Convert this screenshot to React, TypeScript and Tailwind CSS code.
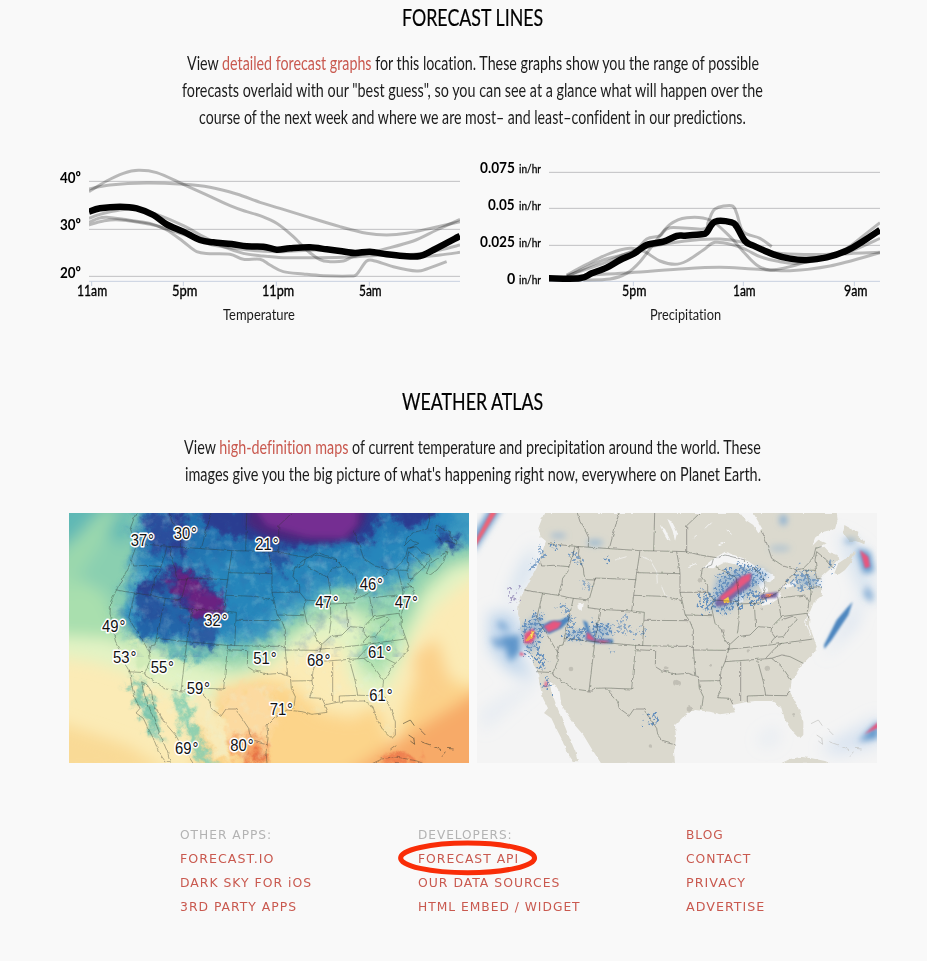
import { useLayoutEffect, useRef, useState, type ReactNode } from "react";

type Pt = [number, number];

/** Condenses a single line of text horizontally until it fills its box. */
function Fit({ className, children }: { className: string; children: ReactNode }) {
  const outer = useRef<HTMLSpanElement>(null);
  const inner = useRef<HTMLSpanElement>(null);
  const [scale, setScale] = useState(1);
  useLayoutEffect(() => {
    if (outer.current && inner.current) {
      setScale(outer.current.clientWidth / inner.current.offsetWidth);
    }
  }, []);
  return (
    <span ref={outer} className={`block ${className}`}>
      <span
        ref={inner}
        className="inline-block origin-left whitespace-nowrap"
        style={{ transform: `scaleX(${scale})` }}
      >
        {children}
      </span>
    </span>
  );
}

const parse = (s: string): Pt[] =>
  s.trim().split(/\s+/).map((p) => p.split(",").map(Number) as Pt);

/** Catmull-Rom spline through the points. */
function smooth(s: string) {
  const p = parse(s);
  let d = `M${p[0][0]},${p[0][1]}`;
  for (let i = 0; i < p.length - 1; i++) {
    const a = p[i - 1] ?? p[i];
    const b = p[i];
    const c = p[i + 1];
    const e = p[i + 2] ?? c;
    d += `C${b[0] + (c[0] - a[0]) / 6},${b[1] + (c[1] - a[1]) / 6} ${c[0] - (e[0] - b[0]) / 6},${c[1] - (e[1] - b[1]) / 6} ${c[0]},${c[1]}`;
  }
  return d;
}

const east = (s: string) => parse(s).map(([x, y]) => `${x + 615},${y}`).join(" ");

const temperature = {
  best: "117,170 150,160 210,155 260,160 310,180 350,208 400,230 450,255 490,262 545,267 590,274 640,275 680,284 720,280 780,277 830,283 870,288 915,294 960,290 1010,298 1060,303 1110,303 1150,285 1230,243",
  others: [
    "117,110 170,78 220,55 265,46 320,53 400,88 460,115 540,152 590,170 630,182 680,205 730,245 770,285 810,314 840,320 880,318 910,305 960,293 1000,283 1090,258 1160,225 1230,193",
    "117,102 180,90 290,84 400,88 480,97 560,117 630,142 690,160 770,185 870,215 950,235 1010,240 1070,235 1150,218 1230,200",
    "117,190 150,178 210,165 260,163 320,178 400,212 460,245 520,275 580,295 630,302 700,308 800,308 900,306 1000,300 1100,297 1170,285 1230,270",
    "117,202 145,190 170,187 220,193 300,205 350,225 400,260 440,290 480,296 540,298 580,313 630,313 660,330 700,350 760,357 820,362 900,363 920,358 950,318 975,318 1030,335 1100,348 1130,342 1190,320",
    "117,210 160,198 210,195 300,208 350,222 420,245 480,268 550,280 620,287 700,290 800,285 900,290 1000,300 1100,305 1170,300 1230,292",
  ],
};

const precipitation = {
  best: "237,370 330,370 365,355 410,338 450,315 490,297 530,270 580,260 620,243 645,242 695,238 710,232 735,200 785,202 800,215 825,258 850,272 910,298 960,311 1010,315 1070,307 1130,287 1180,258 1230,225",
  others: [
    "290,360 350,328 420,295 480,280 520,288 570,318 615,328 650,318 700,285 735,262 790,270 830,285 870,305 920,318 980,325 1060,310 1130,280 1170,250 1230,203",
    "290,365 400,315 490,290 530,252 570,242 600,218 700,222 715,200 735,162 785,152 800,175 820,230 870,250 905,275",
    "340,375 420,372 470,355 510,320 560,255 600,208 650,188 720,195 780,245 820,290 860,330 900,345 960,335 1060,305 1150,295 1230,292",
    "237,375 330,362 480,353 645,341 750,337 850,342 960,347 1080,333 1230,293",
    "290,362 400,325 500,285 645,258 750,252 820,262 900,290 980,298 1100,296 1150,285 1230,250",
  ],
};

function Plot({
  left,
  grid,
  ticks,
  data,
  className,
}: {
  left: number;
  grid: number[];
  ticks: number[];
  data: { best: string; others: string[] };
  className: string;
}) {
  const width = 1230 - left;
  return (
    <svg className={className} viewBox={`${left} 0 ${width} 405`} fill="none">
      {grid.map((y) => (
        <path key={y} d={`M${left},${y}H1230`} stroke="#c0c0c2" strokeWidth={3} />
      ))}
      <path d={`M${left},379H1230`} stroke="#c8d1e0" strokeWidth={3} />
      {ticks.map((x) => (
        <path key={x} d={`M${x},379V393`} stroke="#c8d1e0" strokeWidth={3} />
      ))}
      {data.others.map((l) => (
        <path key={l} d={smooth(l)} stroke="#000" strokeOpacity={0.26} strokeWidth={9} />
      ))}
      <path d={smooth(data.best)} stroke="#000" strokeWidth={19.5} strokeLinejoin="round" />
    </svg>
  );
}

/* ---- Map geometry, three units to the pixel ---- */

const westCoast =
  "222,24 205,70 212,95 228,108 222,125 213,150 208,170 190,205 166,250 146,290 144,330 150,350 152,375 162,415 180,450 194,485 204,502 209,540 219,580 234,610 222,624 244,640 256,665 274,700 292,745 312,772 325,772 316,740 299,700 279,650 259,600 244,560 239,530 256,540 269,560 274,600 294,630 314,660 340,690 364,730 394,776";
const gulfCoast = "615,776 612,740 618,700 " + east(
  "0,660 25,635 60,615 105,620 135,628 180,622 172,600 210,592 240,588 290,588 318,605 328,640 345,670 375,700 385,690 385,650 370,610 345,560 350,527 380,480 415,445 425,425 415,395 402,360 405,320 417,290 440,272 442,250 422,237 440,215 470,188 490,165 488,150 462,140 448,125 428,130 455,115 430,104 412,122 420,98 440,82 480,72 488,45 485,24"
);
const land = `${westCoast} ${gulfCoast}`;
const novaScotia = east("478,205 490,175 515,158 540,140 530,170 510,195 492,208");
const newfoundland = east("505,85 508,60 530,72 550,80 548,95 570,108 568,118 545,108 525,110");
const cuba = east("315,776 345,762 380,755 410,760 450,768 470,776");

const westBorders = [
  "234,116 318,124 420,131 510,137 615,139 650,140 690,150 740,158",
  "322,24 330,50 345,75 356,98 355,126",
  "447,24 418,130",
  "554,24 551,138",
  "212,170 215,183 250,181 297,185",
  "315,124 308,150 297,185 293,200 278,220 276,232 265,271",
  "328,124 325,150 332,172 340,190 342,212 346,224 375,225 376,219",
  "163,255 218,264 265,271 310,280 357,285 376,219 497,224",
  "510,138 497,224 485,318",
  "500,203 630,206",
  "357,285 354,308 390,313 485,318 523,322 518,422",
  "310,280 283,400 374,410 495,421 615,424 670,424",
  "390,313 374,413 357,558",
  "218,264 200,340 262,440 265,465 250,500",
  "283,400 279,420 268,422 262,440",
  "198,500 250,503 246,509 312,552 357,558 372,558 373,550 407,549",
  "407,549 485,552 497,421",
  "407,549 440,585 448,610 478,632 492,612 520,612 540,640 560,670 563,690 580,710 617,720",
  "492,271 580,274 610,280 635,287",
  "523,346 655,347",
  "497,434 557,437 556,485 575,497 600,503 620,508",
];
const eastBorders = [
  "35,140 35,62 75,24",
  "5,140 12,180 15,205 15,262 22,290 30,328 45,350 55,375 55,435 62,510",
  "15,262 98,262",
  "30,330 112,332",
  "115,162 110,180 82,190 78,215 98,240 98,262 115,283 110,310 115,332 120,355 140,375 145,395 155,412 165,418 162,432 150,470 138,500 135,527 138,550 128,578 165,580 173,597",
  "55,435 152,436",
  "0,508 40,505 70,515 73,550 85,575 80,612",
  "73,528 135,527",
  "115,285 188,290",
  "122,185 150,200 183,218 190,260 190,300 192,350 187,385",
  "165,418 190,395 225,390 250,365 290,368 300,355 320,335",
  "188,297 238,295 262,293",
  "238,295 242,365",
  "308,275 318,335 395,325 402,340",
  "318,278 392,270 402,290 397,320",
  "152,436 165,432 285,420 415,402",
  "150,470 290,460 320,485 350,527",
  "272,460 300,430 320,415",
  "290,368 288,380 300,397 285,415",
  "300,397 325,395 345,365 365,345 352,334 320,345",
  "197,470 197,588",
  "248,467 265,530 272,570",
  "217,588 217,573 272,571 335,572 345,560",
  "290,460 320,450 345,455 385,475",
  "262,80 275,115 290,160 325,183 365,195 385,190 415,160 422,130 440,125",
  "385,195 420,196 425,220 440,222",
  "393,198 400,225 408,260 405,290",
  "408,247 440,245",
  "425,140 420,165 425,200",
  "425,140 455,165 475,190",
  "128,158 150,150 210,165 235,190 262,210 270,240 260,285 290,272 310,262 325,240 365,195",
];

function Borders({ coast }: { coast: boolean }) {
  return (
    <g fill="none" stroke="#2a3028" strokeOpacity={0.5} strokeWidth={2.2} filter="url(#ragged)">
      {westBorders.map((b) => (
        <polyline key={b} points={b} />
      ))}
      {eastBorders.map((b) => (
        <polyline key={b} points={east(b)} />
      ))}
      {coast && (
        <>
          <polyline points={westCoast} />
          <polyline points={gulfCoast} />
          <polygon points={novaScotia} />
          <polygon points={newfoundland} />
          <polygon points={cuba} />
          <polyline points={east("82,188 110,165 150,143 205,160 225,185 195,190 180,218")} />
          <polyline points={east("370,735 388,722")} />
          {islands.map((b) => (
            <polyline key={b} points={east(b)} strokeWidth={3} />
          ))}
        </>
      )}
    </g>
  );
}

const islands = [
  "408,656 430,645 442,662",
  "425,690 440,700 443,718 430,708",
  "455,670 475,690",
  "462,710 490,720",
  "500,725 525,735",
  "540,730 560,732",
  "525,755 535,740",
];

function Filters() {
  return (
    <defs>
      <filter id="ragged" x="-5%" y="-5%" width="110%" height="110%">
        <feTurbulence type="fractalNoise" baseFrequency="0.06" numOctaves={2} seed={4} />
        <feDisplacementMap in="SourceGraphic" scale={9} xChannelSelector="R" yChannelSelector="G" />
      </filter>
      <filter id="front" x="-20%" y="-20%" width="140%" height="140%">
        <feTurbulence type="fractalNoise" baseFrequency="0.02" numOctaves={5} seed={3} result="n" />
        <feGaussianBlur in="SourceGraphic" stdDeviation={19} result="b" />
        <feDisplacementMap in="b" in2="n" scale={70} xChannelSelector="R" yChannelSelector="G" />
      </filter>
      <filter id="rough" x="-20%" y="-20%" width="140%" height="140%">
        <feTurbulence type="fractalNoise" baseFrequency="0.03" numOctaves={5} seed={8} result="n" />
        <feGaussianBlur in="SourceGraphic" stdDeviation={10} result="b" />
        <feDisplacementMap in="b" in2="n" scale={75} xChannelSelector="R" yChannelSelector="G" />
      </filter>
      <filter id="terrain" x="0" y="0" width="100%" height="100%">
        <feTurbulence type="fractalNoise" baseFrequency="0.025" numOctaves={5} seed={21} />
        <feColorMatrix values="0 0 0 0 0.05  0 0 0 0 0.12  0 0 0 0 0.4  2.6 0 0 0 -1.25" />
      </filter>
      <filter id="glint" x="0" y="0" width="100%" height="100%">
        <feTurbulence type="fractalNoise" baseFrequency="0.03" numOctaves={5} seed={5} />
        <feColorMatrix values="0 0 0 0 0.75  0 0 0 0 0.95  0 0 0 0 0.85  0 2.6 0 0 -1.3" />
      </filter>
      <filter id="soft" x="-30%" y="-30%" width="160%" height="160%">
        <feGaussianBlur stdDeviation={22} />
      </filter>
      <filter id="mist" x="-30%" y="-30%" width="160%" height="160%">
        <feGaussianBlur stdDeviation={9} />
      </filter>
      <filter id="edge" x="-30%" y="-30%" width="160%" height="160%">
        <feGaussianBlur stdDeviation={3} />
      </filter>
      <filter id="speckle" x="-30%" y="-30%" width="160%" height="160%">
        <feTurbulence type="fractalNoise" baseFrequency="0.13" numOctaves={2} seed={11} result="n" />
        <feTurbulence type="fractalNoise" baseFrequency="0.05" numOctaves={3} seed={2} result="w" />
        <feDisplacementMap in="SourceGraphic" in2="w" scale={55} xChannelSelector="R" yChannelSelector="G" result="d" />
        <feColorMatrix in="n" values="0 0 0 0 0  0 0 0 0 0  0 0 0 0 0  0 0 9 0 -4.3" result="m" />
        <feComposite in="d" in2="m" operator="in" />
      </filter>
      <clipPath id="landmass">
        <polygon points={land} transform="translate(6 0)" />
      </clipPath>
    </defs>
  );
}

const readings: [string, number, number][] = [
  ["37", 212, 123],
  ["30", 341, 101],
  ["21", 586, 134],
  ["46", 899, 255],
  ["47", 766, 310],
  ["47", 1004, 310],
  ["32", 433, 363],
  ["49", 126, 382],
  ["53", 159, 473],
  ["55", 272, 504],
  ["51", 580, 478],
  ["68", 741, 484],
  ["61", 924, 459],
  ["59", 380, 568],
  ["61", 928, 587],
  ["71", 629, 629],
  ["69", 345, 746],
  ["80", 511, 739],
];

function TemperatureMap() {
  return (
    <svg className="h-[250px] w-[400px]" viewBox="27 24 1200 750" fontFamily="'Liberation Sans', Arial, sans-serif">
      <Filters />
      <rect x="27" y="24" width="1200" height="750" fill="#fbebb6" />
      <g filter="url(#soft)">
        <polygon points="-40,640 200,720 330,800 -40,820" fill="#f9da96" />
        <polygon points="460,560 600,520 690,540 780,620 880,640 950,600 1000,740 1050,560 1110,430 1160,520 1280,560 1280,820 400,820 420,620" fill="#fcd48a" />
        <polygon points="1060,450 1130,400 1180,560 1080,640" fill="#fbd08a" />
        <polygon points="1150,620 1280,540 1280,820 840,820 960,740" fill="#f7aa68" />
        <polygon points="-40,-40 1280,-40 1280,190 1200,240 1120,310 1060,400 1000,530 960,590 900,560 860,500 850,430 790,410 700,440 620,490 560,520 480,540 440,640 330,560 200,500 100,470 -40,450" fill="#e2f3c4" />
        <polygon points="-40,-40 1280,-40 1280,160 1170,190 1090,270 1040,380 1010,450 960,520 900,490 900,420 930,360 870,310 770,350 690,400 600,480 520,500 420,480 300,450 140,400 -40,390" fill="#a9dfae" />
        <polygon points="-40,-40 1280,-40 1280,150 1180,170 1090,230 1040,340 930,310 800,300 700,370 620,450 530,480 420,440 300,420 180,370 130,260 -40,180" fill="#8acfb0" />
        <polygon points="-40,-40 220,-40 200,120 100,70 -40,150" fill="#5fb8b5" />
        <polygon points="130,10 190,10 20,270 0,150" fill="#9bd8ad" />
      </g>
      <g filter="url(#front)">
        <polygon points="235,-20 1280,-20 1280,90 1190,125 1120,150 1060,200 1010,240 930,250 850,230 780,280 690,340 620,400 540,420 440,430 330,410 215,400 190,330 185,270 225,190" fill="#3f9dc2" />
        <polygon points="250,-20 1240,-20 1150,110 1050,180 900,200 780,240 700,270 620,340 540,380 440,410 330,400 230,380 210,290 260,190" fill="#2586bb" />
        <polygon points="250,0 1130,0 1100,60 1000,80 900,130 760,140 660,170 640,220 560,150 420,160 400,220 330,180 240,170" fill="#2473b1" />
      </g>
      <g filter="url(#rough)">
        <polygon points="225,250 300,190 400,180 460,230 500,320 440,400 370,380 330,400 230,390" fill="#2265a9" />
        <polygon points="250,20 310,20 340,100 330,170 270,120" fill="#2a4d9c" />
        <polygon points="320,0 375,0 385,130 365,170 345,120" fill="#2c3d91" />
        <polygon points="225,260 300,200 320,250 290,270 230,285" fill="#2a3f90" />
        <polygon points="225,300 300,280 310,340 260,350" fill="#25529d" />
        <polygon points="310,195 400,190 450,240 500,320 440,370 370,330 340,270" fill="#363388" />
        <polygon points="620,130 690,130 680,190 640,210" fill="#2657a0" />
        <polygon points="1125,80 1180,85 1205,125 1145,125" fill="#274896" />
      </g>
      <g filter="url(#rough)">
        <polygon points="330,215 400,205 430,250 490,290 480,330 390,340 380,290 400,260" fill="#6a2381" />
        <polygon points="325,230 390,225 400,270 340,270" fill="#65217f" />
        <polygon points="360,400 440,350 470,370 460,430" fill="#2b5ba2" />
      </g>
      <g filter="url(#rough)">
        <polygon points="490,560 620,540 650,640 620,720 550,740 490,680" fill="#fcdaa0" />
        <polygon points="210,400 270,420 290,500 230,490" fill="#d0ebb8" />
        <polygon points="390,580 440,560 480,640 520,760 470,760 420,650" fill="#f8eab8" />
        <polygon points="345,560 375,570 405,670 460,780 430,780 375,680" fill="#85ceb0" />
        <polygon points="215,520 240,530 290,640 310,720 280,690 240,620" fill="#74c3ac" />
        <polygon points="320,420 450,430 430,460 330,470" fill="#63b5b4" />
        <polygon points="505,700 600,690 630,780 560,780" fill="#f6a566" />
        <polygon points="570,735 610,740 600,780 570,780" fill="#e76a3e" />
        <polygon points="890,470 930,430 970,380 1000,400 940,450" fill="#7dccb0" />
        <polygon points="960,770 1000,755 1060,765 1090,780" fill="#e9623c" />
      </g>
      <g clipPath="url(#landmass)">
        <rect x="27" y="24" width="1200" height="430" filter="url(#terrain)" opacity={0.25} />
        <rect x="27" y="24" width="1200" height="750" filter="url(#glint)" opacity={0.22} />
      </g>
      <g filter="url(#rough)">
        <polygon points="400,0 970,0 930,110 840,105 700,130 600,125 540,100 430,60" fill="#2b3c91" />
        <polygon points="980,0 1130,0 1120,55 1000,55" fill="#2a3b90" />
      </g>
      <g filter="url(#mist)">
        <polygon points="565,0 930,0 910,60 870,105 790,115 700,110 620,95 560,60" fill="#49257d" />
        <polygon points="580,0 895,0 890,60 850,100 740,95 620,60" fill="#752f92" />
      </g>
      <g transform="translate(6 0)">
        <Borders coast />
      </g>
      <g fontSize={49} fill="#111" stroke="#fff" strokeWidth={9} strokeLinejoin="round" paintOrder="stroke">
        {readings.map(([t, x, y]) => (
          <text key={`${x}-${y}`} x={x} y={y} textLength={70} lengthAdjust="spacingAndGlyphs">
            {t}
            <tspan dx={3}>°</tspan>
          </text>
        ))}
      </g>
    </svg>
  );
}

const water = [
  east("82,188 110,165 150,140 205,160 245,185 225,192 190,180 150,172 115,190"),
  east("225,195 265,192 300,215 285,232 268,225 278,262 262,262 245,230"),
  east("183,225 205,225 205,290 188,295 180,260"),
  east("255,292 285,278 318,262 312,280 285,298 262,302"),
  east("318,243 355,228 368,232 350,245 322,250"),
  east("195,24 235,24 262,72 250,85 235,60 212,45"),
  "570,62 585,72 602,108 592,102 582,85",
  "592,42 606,50 622,82 615,108 608,78",
  "325,290 338,295 335,318 326,310",
];

function PrecipitationMap() {
  return (
    <svg className="h-[250px] w-[400px]" viewBox="21 24 1200 750">
      <rect x="21" y="24" width="1200" height="750" fill="#f4f4f4" />
      <g filter="url(#soft)" fill="#b5cfea">
        <polygon points="60,320 140,330 150,460 200,520 120,500 60,430" fillOpacity={0.9} />
        <polygon points="150,180 200,110 190,200 130,290 110,280" fillOpacity={0.5} />
        <polygon points="30,620 180,520 200,540 40,680" fillOpacity={0.2} />
        <polygon points="1100,80 1180,130 1220,300 1170,260" fillOpacity={0.5} />
        <polygon points="1060,460 1180,260 1160,360" fillOpacity={0.45} />
        <polygon points="1050,730 1230,630 1230,720 1100,750" fillOpacity={0.45} />
        <polygon points="860,700 920,660 930,710 880,730" fillOpacity={0.2} />
      </g>
      <g filter="url(#mist)" fill="#5f96cb">
        <polygon points="95,395 150,390 150,440 120,470" />
        <polygon points="60,400 140,400 140,420 80,430" fillOpacity={0.7} />
        <polygon points="80,350 100,350 120,380 90,370" fillOpacity={0.7} />
        <polygon points="1160,130 1200,140 1212,200 1180,205" />
        <polygon points="1190,240 1210,270 1205,295 1180,270" fillOpacity={0.7} />
        <polygon points="1165,710 1225,645 1225,700" />
        <polygon points="10,90 60,10 95,10 10,145" />
      </g>
      <g filter="url(#ragged)">
        <polygon points={land} fill="#dbd9ce" />
        <polygon points={novaScotia} fill="#dbd9ce" />
        <polygon points={newfoundland} fill="#dbd9ce" />
        <polygon points={cuba} fill="#dbd9ce" />
        {water.map((w) => (
          <polygon key={w} points={w} fill="#f4f4f4" />
        ))}
        <g fill="none" stroke="#f4f4f4" strokeWidth={3}>
          <polyline points="515,155 540,165 560,200 562,235" strokeOpacity={0.7} />
          <polyline points="575,245 585,270 600,278" strokeOpacity={0.7} />
          <polyline points="435,165 470,155" strokeOpacity={0.7} />
          <polyline points={east("55,100 65,90")} />
          <polyline points={east("90,70 110,50")} />
          <polyline points={east("130,120 150,112")} />
          <polyline points={east("155,75 170,88")} />
          <polyline points={east("40,185 65,175")} />
          <polyline points={east("404,320 392,350 408,392")} />
        </g>
        <g fill="#c1bfb5">
          <circle cx="303" cy="492" r="7" />
          <circle cx="587" cy="490" r="6" />
          <circle cx="618" cy="533" r="9" />
          <circle cx="541" cy="723" r="5" />
          <circle cx="690" cy="226" r="7" />
          <circle cx="658" cy="612" r="8" />
          <circle cx="625" cy="535" r="8" />
          <circle cx="892" cy="490" r="8" />
          <circle cx="759" cy="378" r="6" />
          <circle cx="722" cy="481" r="4" />
          <circle cx="835" cy="438" r="5" />
          <circle cx="875" cy="312" r="4" />
          <circle cx="690" cy="542" r="4" />
          <circle cx="971" cy="628" r="4" />
        </g>
      </g>
      <g filter="url(#mist)" fill="#7ea9d2">
        <ellipse cx="265" cy="92" rx="24" ry="8" fillOpacity={0.6} />
        <ellipse cx="375" cy="113" rx="25" ry="9" fillOpacity={0.7} />
        <ellipse cx="940" cy="45" rx="10" ry="16" />
        <ellipse cx="930" cy="130" rx="32" ry="10" fillOpacity={0.4} />
        <ellipse cx="1140" cy="108" rx="18" ry="7" />
        <polygon points="150,370 210,325 220,360 205,400 190,440 160,430" fillOpacity={0.6} />
        <polygon points="740,220 800,190 870,190 900,210 830,270 770,320 720,310" fillOpacity={0.6} />
        <polygon points="970,235 1000,215 1045,225 1045,240" fillOpacity={0.8} />
        <polygon points="365,365 420,360 420,395 370,395" fillOpacity={0.6} />
        <polygon points="290,378 345,378 345,400 290,400" fillOpacity={0.6} />
      </g>
      <g filter="url(#speckle)" fill="#6690bd">
        <polygon points="150,370 210,315 230,360 215,400 190,440 230,460 225,490 165,450" />
        <polygon points="265,300 280,290 320,350 300,370" fillOpacity={0.8} />
        <polygon points="285,370 350,370 350,410 285,405" />
        <polygon points="365,350 425,350 435,385 400,405 360,395" />
        <polygon points="450,330 475,340 485,380 525,375 525,390 440,390" fillOpacity={0.7} />
        <polygon points="410,425 440,430 440,450 425,450" fillOpacity={0.6} />
        <polygon points="185,170 220,130 230,140 205,180 175,205" fillOpacity={0.8} />
        <polygon points="115,260 150,250 130,300 110,300" fill="#8a7fb0" fillOpacity={0.7} />
        <polygon points="240,115 265,115 250,145" />
        <polygon points="305,130 350,180 330,185 295,150" fillOpacity={0.8} />
        <polygon points="330,230 370,235 360,255 325,250" fillOpacity={0.6} />
        <polygon points="400,155 415,155 415,175 400,170" />
        <polygon points="220,525 240,525 240,555 225,555" />
        <polygon points="520,645 560,630 575,640 550,660 525,660" />
        <polygon points="730,260 740,220 800,180 870,185 900,210 850,250 900,290 860,300 810,295 770,325 700,315 715,270" />
        <polygon points="950,240 980,190 1030,200 1050,240 990,255" fillOpacity={0.8} />
        <polygon points="1065,165 1095,160 1095,200 1065,195" fillOpacity={0.7} />
        <polygon points="680,300 705,250 720,270 700,320" />
      </g>
      <g fill="#4e86bf">
        <g filter="url(#edge)">
          <polygon points="213,362 240,348 270,346 300,332 300,345 275,370 235,388" />
          <polygon points="338,345 352,352 362,385 380,402 428,402 430,415 380,415 345,405 350,380" />
          <polygon points="1063,432 1062,420 1100,345 1130,310 1148,290 1135,330 1085,405" />
          <polygon points="735,290 800,220 845,205 840,245 800,270 770,300 740,305" fill="#7a6aa5" />
          <polygon points="870,270 925,260 920,278 870,282" fill="#7a6aa5" />
        </g>
      </g>
      <g filter="url(#edge)" fill="#e6567f">
        <polygon points="222,364 250,348 275,352 265,370 235,382" />
        <polygon points="352,380 375,405 425,408 400,414 350,402" />
        <polygon points="165,385 190,370 197,395 185,415 162,415" />
        <polygon points="150,440 165,450 150,452" />
        <polygon points="815,215 842,205 840,225 790,265 755,290 750,275 790,245" />
        <polygon points="880,272 910,265 900,275" />
        <polygon points="1170,135 1195,155 1200,185 1185,190" />
        <polygon points="1183,688 1225,650 1225,668" />
        <polygon points="15,108 65,15 80,22 15,128" fill="#ee6478" />
        <polygon points="225,530 232,530 230,545 224,545" />
      </g>
      <g filter="url(#ragged)">
        <polygon points="172,395 188,378 195,380 190,400 170,410" fill="#f0a24c" />
        <polygon points="180,385 192,380 188,396" fill="#fbe36a" />
        <polygon points="760,285 775,275 780,292 762,298" fill="#fbc84a" />
        <polygon points="885,272 905,266 900,276" fill="#f2925a" />
      </g>
      <Borders coast={false} />
      <g fill="none" stroke="#c2c3bf" strokeWidth={2} filter="url(#ragged)">
        {islands.map((b) => (
          <polyline key={b} points={east(b)} />
        ))}
      </g>
    </svg>
  );
}

const link = "text-[#c9594f]";

const footer = [
  { title: "OTHER APPS:", titleWidth: "w-[92px]", links: [["FORECAST.IO", "w-[94px]"], ["DARK SKY FOR iOS", "w-[132px]"], ["3RD PARTY APPS", "w-[117px]"]], box: "w-[238px]" },
  { title: "DEVELOPERS:", titleWidth: "w-[95px]", links: [["FORECAST API", "w-[101px]"], ["OUR DATA SOURCES", "w-[142px]"], ["HTML EMBED / WIDGET", "w-[163px]"]], box: "w-[268px]" },
  { title: "", titleWidth: "", links: [["BLOG", "w-[38px]"], ["CONTACT", "w-[65px]"], ["PRIVACY", "w-[60px]"], ["ADVERTISE", "w-[79px]"]], box: "w-[100px]" },
];

export default function App() {
  return (
    <div className="h-[961px] w-[927px] overflow-hidden bg-[#f9f9f9] font-['Lato','Open_Sans',sans-serif] text-[#1c1c1c] [font-variant-ligatures:none]">
      <section className="flex h-[384px] flex-col">
        <h2 className="ml-[402px] h-[50px] pt-px text-[24px] leading-8 text-black [-webkit-text-stroke:0.2px_black]">
          <Fit className="w-[141px]">FORECAST LINES</Fit>
        </h2>
        <div className="ml-[18px] flex h-[105px] flex-col items-center text-[18.5px] leading-[27px]">
          <Fit className="w-[572px]">
            View <a className={link}>detailed forecast graphs</a> for this location. These graphs show you the range of possible
          </Fit>
          <Fit className="w-[581px]">
            forecasts overlaid with our "best guess", so you can see at a glance what will happen over the
          </Fit>
          <Fit className="w-[547px]">
            course of the next week and where we are most– and least–confident in our predictions.
          </Fit>
        </div>
        <div className="flex">
          <div className="w-[460px]">
            <div className="flex h-[125px]">
              <div className="w-[89px] pl-[60px] pt-[10px] text-[16px] font-bold leading-[24px] text-black">
                <Fit className="mb-[23px] w-[21px]">40º</Fit>
                <Fit className="mb-[24px] w-[21px]">30º</Fit>
                <Fit className="w-[21px]">20º</Fit>
              </div>
              <Plot className="h-[135px] w-[371px] shrink-0" left={117} grid={[79, 223, 364]} ticks={[125, 400, 679, 958]} data={temperature} />
            </div>
            <div className="ml-[45px] flex text-[15px] leading-[20px] text-black [-webkit-text-stroke:0.35px_black]">
              <span className="flex w-[93px] justify-center"><Fit className="w-[30px]">11am</Fit></span>
              <span className="flex w-[93px] justify-center"><Fit className="w-[25px]">5pm</Fit></span>
              <span className="flex w-[93px] justify-center"><Fit className="w-[32px]">11pm</Fit></span>
              <span className="flex w-[93px] justify-center"><Fit className="w-[23px]">5am</Fit></span>
            </div>
            <div className="ml-[223px] pt-1 text-[15.5px] leading-[20px]">
              <Fit className="w-[72px]">Temperature</Fit>
            </div>
          </div>
          <div className="w-[420px]">
            <div className="flex h-[125px]">
              <div className="flex w-[89px] flex-col gap-[13px] pr-[8px] text-[16px] leading-[24px] text-black">
                {[
                  ["0.075", "w-[35px]"],
                  ["0.05", "w-[27px]"],
                  ["0.025", "w-[35px]"],
                  ["0", "w-[8px]"],
                ].map(([t, w]) => (
                  <div key={t} className="flex h-6 items-baseline justify-end gap-[4px]">
                    <Fit className={`font-bold ${w}`}>{t}</Fit>
                    <span className="text-[12px] [-webkit-text-stroke:0.3px_black]">
                      <Fit className="w-[22px]">in/hr</Fit>
                    </span>
                  </div>
                ))}
              </div>
              <Plot className="h-[135px] w-[331px] shrink-0" left={237} grid={[52, 160, 271]} ticks={[490, 820, 1153]} data={precipitation} />
            </div>
            <div className="ml-[118px] flex text-[15px] leading-[20px] text-black [-webkit-text-stroke:0.35px_black]">
              <span className="flex w-[111px] shrink-0 justify-center"><Fit className="w-[24px]">5pm</Fit></span>
              <span className="flex w-[111px] shrink-0 justify-center"><Fit className="w-[23px]">1am</Fit></span>
              <span className="flex w-[111px] shrink-0 justify-center"><Fit className="w-[24px]">9am</Fit></span>
            </div>
            <div className="ml-[190px] pt-1 text-[15.5px] leading-[20px]">
              <Fit className="w-[71px]">Precipitation</Fit>
            </div>
          </div>
        </div>
      </section>

      <section className="h-[439px]">
        <h2 className="ml-[402px] h-[50px] pt-px text-[24px] leading-8 text-black [-webkit-text-stroke:0.2px_black]">
          <Fit className="w-[141px]">WEATHER ATLAS</Fit>
        </h2>
        <div className="ml-[18px] flex h-[79px] flex-col items-center text-[18.5px] leading-[27px]">
          <Fit className="w-[577px]">
            View <a className={link}>high-definition maps</a> of current temperature and precipitation around the world. These
          </Fit>
          <Fit className="w-[576px]">
            images give you the big picture of what's happening right now, everywhere on Planet Earth.
          </Fit>
        </div>
        <div className="ml-[69px] flex gap-2">
          <TemperatureMap />
          <PrecipitationMap />
        </div>
      </section>

      <footer className="ml-[180px] flex font-['DejaVu_Sans',Verdana,sans-serif] text-[12.5px] leading-6 tracking-[1px]">
        {footer.map((col) => (
          <div key={col.box} className={`relative ${col.box}`}>
            {col.title && <Fit className={`text-[#b3b3b3] ${col.titleWidth}`}>{col.title}</Fit>}
            {col.links.map(([t, w]) => (
              <a key={t} className={`block ${link}`}>
                <Fit className={w}>{t}</Fit>
              </a>
            ))}
            {col.title === "DEVELOPERS:" && (
              <svg className="absolute -left-5 top-[17px] h-[37px] w-[140px]" viewBox="0 0 140 37">
                <ellipse cx="69.6" cy="17.9" rx="67" ry="14.8" fill="none" stroke="#f92d08" strokeWidth="5" />
              </svg>
            )}
          </div>
        ))}
      </footer>
    </div>
  );
}
